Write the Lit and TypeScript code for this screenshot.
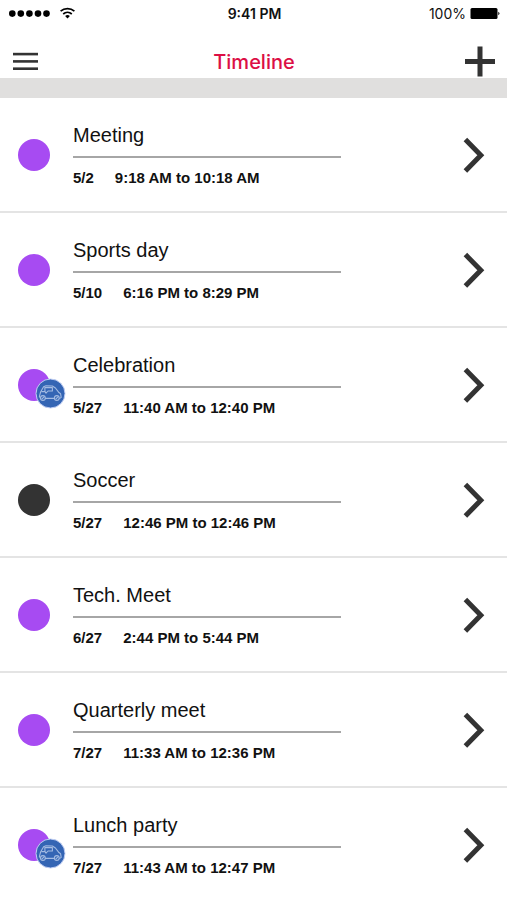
import { LitElement, html, css, svg, nothing } from "lit";
import { customElement, property } from "lit/decorators.js";
import { classMap } from "lit/directives/class-map.js";

interface TimelineEvent {
  title: string;
  date: string;
  time: string;
  dark?: boolean;
  car?: boolean;
}

const EVENTS: TimelineEvent[] = [
  { title: "Meeting", date: "5/2", time: "9:18 AM to 10:18 AM" },
  { title: "Sports day", date: "5/10", time: "6:16 PM to 8:29 PM" },
  { title: "Celebration", date: "5/27", time: "11:40 AM to 12:40 PM", car: true },
  { title: "Soccer", date: "5/27", time: "12:46 PM to 12:46 PM", dark: true },
  { title: "Tech. Meet", date: "6/27", time: "2:44 PM to 5:44 PM" },
  { title: "Quarterly meet", date: "7/27", time: "11:33 AM to 12:36 PM" },
  { title: "Lunch party", date: "7/27", time: "11:43 AM to 12:47 PM", car: true },
];

@customElement("status-bar")
export class StatusBar extends LitElement {
  static styles = css`
    :host {
      display: grid;
      grid-template-columns: 1fr auto 1fr;
      align-items: center;
      height: 28px;
      padding: 0 6px 0 8px;
      font: 500 14px/16px Inter, "Liberation Sans", sans-serif;
      color: #111;
    }
    svg {
      display: block;
    }
    .signal,
    .power {
      display: flex;
      align-items: center;
    }
    .signal {
      gap: 9px;
    }
    .power {
      justify-content: flex-end;
      gap: 4px;
      font-weight: 400;
    }
    .clock {
      font-weight: 600;
    }
  `;

  render() {
    return html`
      <div class="signal">
        <svg width="43" height="8" viewBox="0 0 43 8" aria-label="Signal">
          ${[4.3, 12.8, 21.4, 30, 38.5].map((x) => svg`<circle cx=${x} cy="3.6" r="3.3" />`)}
        </svg>
        <svg width="16" height="14" viewBox="0 0 16 14" fill="none" stroke="#000" stroke-width="1.7" aria-label="Wi-Fi">
          <path d="M0.6 4.2a10.4 10.4 0 0 1 13.8 0" />
          <path d="M3.2 7a6.7 6.7 0 0 1 8.6 0" />
          <path d="M7.5 11.6 5.1 9.1a3.6 3.6 0 0 1 4.8 0z" fill="#000" stroke="none" />
        </svg>
      </div>
      <div class="clock">9:41 PM</div>
      <div class="power">
        <span>100%</span>
        <svg width="31" height="12" viewBox="0 0 31 12" aria-label="Battery full">
          <rect x="0.5" y="0" width="27" height="11" rx="1.5" />
          <path d="M28.3 3.7a2 2 0 0 1 0 3.6z" />
        </svg>
      </div>
    `;
  }
}

@customElement("timeline-row")
export class TimelineRow extends LitElement {
  @property({ attribute: false }) event!: TimelineEvent;

  static styles = css`
    :host {
      display: block;
    }
    .row {
      display: flex;
      align-items: center;
      width: 100%;
      height: 113px;
      padding: 0 22px 0 18px;
      border: 0;
      background: none;
      color: #111;
      text-align: left;
      font-family: "Liberation Sans", Arial, sans-serif;
      box-sizing: border-box;
    }
    .marker {
      position: relative;
      flex: none;
      width: 32px;
      height: 32px;
      border-radius: 50%;
      background: #a74bf2;
    }
    .marker.dark {
      background: #333;
    }
    .badge {
      position: absolute;
      left: 17px;
      top: 9px;
    }
    .details {
      flex: 0 1 268px;
      margin-left: 23px;
    }
    .title {
      display: block;
      padding-bottom: 9px;
      border-bottom: 2px solid #a6a6a6;
      font-size: 20px;
      line-height: 24px;
    }
    .when {
      display: flex;
      gap: 21px;
      padding-top: 11px;
      font-size: 15px;
      font-weight: 700;
      line-height: 17px;
      white-space: nowrap;
    }
    .chevron {
      flex: none;
      display: block;
      margin-left: auto;
    }
  `;

  render() {
    const e = this.event;
    return html`
      <button class="row" type="button">
        <span class=${classMap({ marker: true, dark: !!e.dark })}>
          ${e.car
            ? html`<svg class="badge" width="31" height="31" viewBox="0 0 31 31" aria-label="Travel by car">
                <circle cx="15.5" cy="15.5" r="14.5" fill="#3465b4" stroke="#c3d0f4" stroke-width="1" />
                <g fill="none" stroke="#a3bbe2" stroke-width="1.1" stroke-linejoin="round" stroke-linecap="round">
                  <path d="M5.4 20.2 4.4 18.4 5.6 14 8.6 8.8 11 7.8 17.4 8 20.4 10 23.6 14.2 25.6 15.8 26.2 19.4 24.8 20.4" />
                  <path d="M10.4 20.4H19" />
                  <path d="M6.8 13.6 10 13.4 9.8 9.6H17.4V13H13L11 15.2 10 13.4" />
                  <circle cx="7.9" cy="20" r="2.4" />
                  <circle cx="21.8" cy="20" r="2.4" />
                  <path d="M7 20.8 8.8 19.2M20.9 20.8 22.7 19.2" />
                </g>
              </svg>`
            : nothing}
        </span>
        <span class="details">
          <span class="title">${e.title}</span>
          <span class="when"><span>${e.date}</span><span>${e.time}</span></span>
        </span>
        <svg class="chevron" width="22" height="36" viewBox="0 0 22 36" fill="none" stroke="#333" stroke-width="5">
          <path d="M2.4 2.6 17.8 18.3 2.4 34" />
        </svg>
      </button>
    `;
  }
}

@customElement("app-root")
export class AppRoot extends LitElement {
  static styles = css`
    :host {
      display: block;
      min-height: 100vh;
      background: #fff;
    }
    .nav {
      display: grid;
      grid-template-columns: 1fr auto 1fr;
      align-items: center;
      height: 50px;
      padding: 17px 11px 0 12px;
      box-sizing: border-box;
    }
    h1 {
      margin: 0;
      font: 500 20px/24px Inter, "Liberation Sans", sans-serif;
      color: #dc0f45;
    }
    .icon {
      display: block;
      padding: 0;
      border: 0;
      background: none;
    }
    .icon svg {
      display: block;
    }
    .add {
      justify-self: end;
    }
    .band {
      height: 20px;
      background: #e0dfde;
    }
    ul {
      margin: 0;
      padding: 0;
      list-style: none;
    }
    li {
      border-bottom: 2px solid #e4e4e4;
    }
    li:last-child {
      height: 110px;
      overflow: hidden;
      border-bottom: 0;
    }
  `;

  render() {
    return html`
      <status-bar></status-bar>
      <header class="nav">
        <button class="icon" type="button" aria-label="Menu">
          <svg width="27" height="20" viewBox="0 0 27 20" fill="#333">
            <rect x="1" y="0.8" width="25" height="2.6" />
            <rect x="1" y="8.1" width="25" height="2.6" />
            <rect x="1" y="15.4" width="25" height="2.6" />
          </svg>
        </button>
        <h1>Timeline</h1>
        <button class="icon add" type="button" aria-label="Add event">
          <svg width="32" height="32" viewBox="0 0 32 32" fill="#333">
            <rect x="1" y="13" width="30" height="5" />
            <rect x="13.5" y="0.5" width="5" height="30" />
          </svg>
        </button>
      </header>
      <div class="band"></div>
      <ul>
        ${EVENTS.map((e) => html`<li><timeline-row .event=${e}></timeline-row></li>`)}
      </ul>
    `;
  }
}
